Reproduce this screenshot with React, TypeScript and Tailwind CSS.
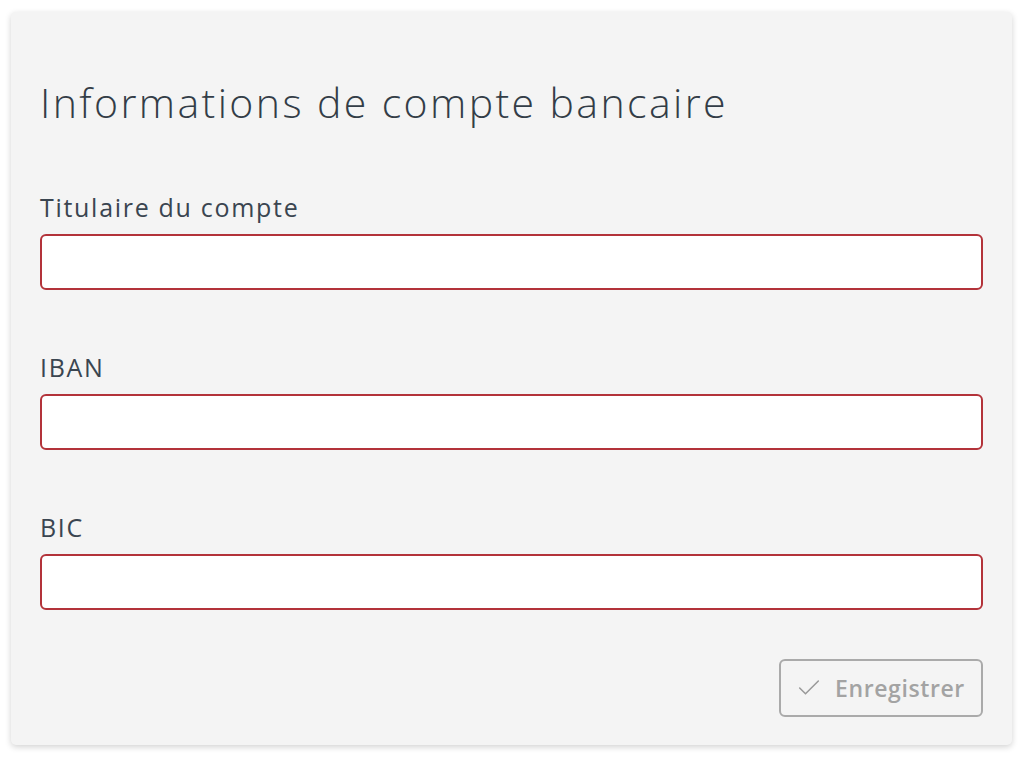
import { Check } from 'lucide-react';

const FONT = '"Open Sans", "Noto Sans", sans-serif';

function Field({ label }: { label: string }) {
  return (
    <div className="flex flex-col">
      <label className="text-[25px] leading-[32px] text-[#3a4550] tracking-[1.7px]" style={{ fontFamily: FONT }}>
        {label}
      </label>
      <input
        type="text"
        className="mt-[11px] h-[56px] w-full rounded-[6px] border-[2px] border-[#b3333a] bg-white px-3 outline-none"
      />
    </div>
  );
}

export default function App() {
  return (
    <div className="min-h-[757px] w-[1024px] bg-white pt-[12px] pl-[11px]" style={{ fontFamily: FONT }}>
      <div className="flex h-[733px] w-[1001px] flex-col rounded-[5px] bg-[#f4f4f4] px-[29px] pt-[68px] shadow-[0_2px_6px_rgba(0,0,0,0.18)]">
        <h1 className="text-[41px] leading-[44px] font-light text-[#333d47] tracking-[2.4px]">
          Informations de compte bancaire
        </h1>
        <div className="mt-[67px] flex flex-col gap-[61px]">
          <Field label="Titulaire du compte" />
          <Field label="IBAN" />
          <Field label="BIC" />
        </div>
        <div className="mt-[49px] flex justify-end">
          <button className="flex h-[58px] w-[204px] items-center justify-center gap-[12px] rounded-[6px] border-[2px] border-[#aaaaaa] pr-[2px] text-[23px] font-semibold text-[#a3a3a3] tracking-[0.6px]">
            <Check size={28} strokeWidth={1.3} className="text-[#999999]" />
            Enregistrer
          </button>
        </div>
      </div>
    </div>
  );
}
